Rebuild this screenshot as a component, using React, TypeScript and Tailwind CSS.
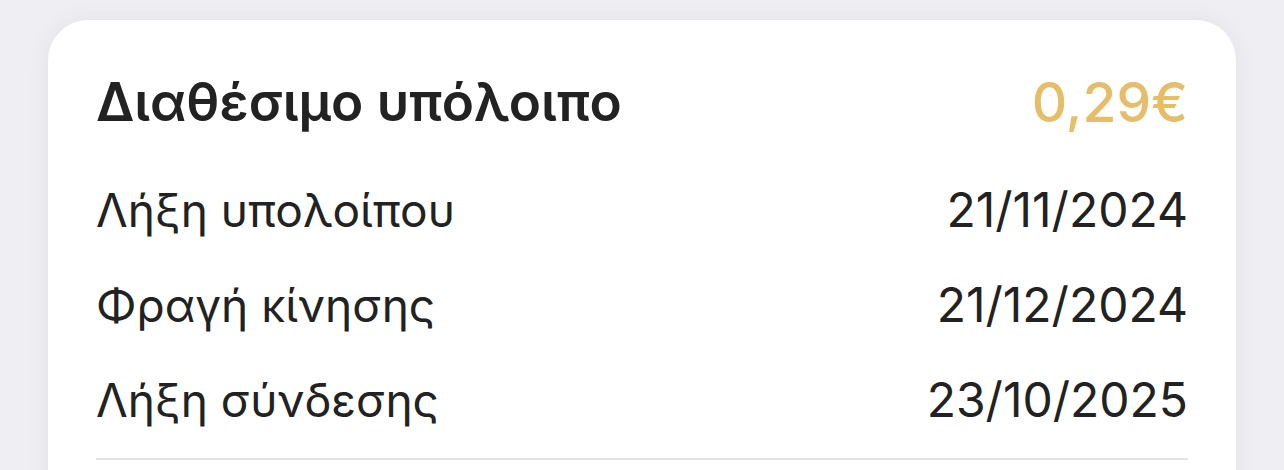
import React from "react";

const rows = [
  ["Λήξη υπολοίπου", "21/11/2024"],
  ["Φραγή κίνησης", "21/12/2024"],
  ["Λήξη σύνδεσης", "23/10/2025"],
];

export default function App() {
  return (
    <div
      className="w-[1284px] h-[470px] overflow-hidden bg-[#efeff3] px-[48px] pt-[20px]"
      style={{ fontFamily: "Inter, 'Noto Sans', sans-serif" }}
    >
      <div className="bg-white rounded-[40px] h-[520px] shadow-[0_0_24px_rgba(0,0,0,0.06)] px-[48px] pt-[48px]">
        <div className="flex items-center justify-between h-[68px]">
          <span className="text-[53px] font-semibold text-[#222222] leading-none">Διαθέσιμο υπόλοιπο</span>
          <span className="text-[55px] font-medium text-[#e6bd69] leading-none">0,29€</span>
        </div>
        <div className="flex flex-col mt-[26px]">
          {rows.map(([l, r]) => (
            <div key={l} className="flex items-center justify-between h-[95px] text-[#222222] leading-none">
              <span className="text-[46px]">{l}</span>
              <span className="text-[48px]">{r}</span>
            </div>
          ))}
        </div>
        <div className="h-[2px] bg-[#e4e4e6] mt-[11px]" />
      </div>
    </div>
  );
}
